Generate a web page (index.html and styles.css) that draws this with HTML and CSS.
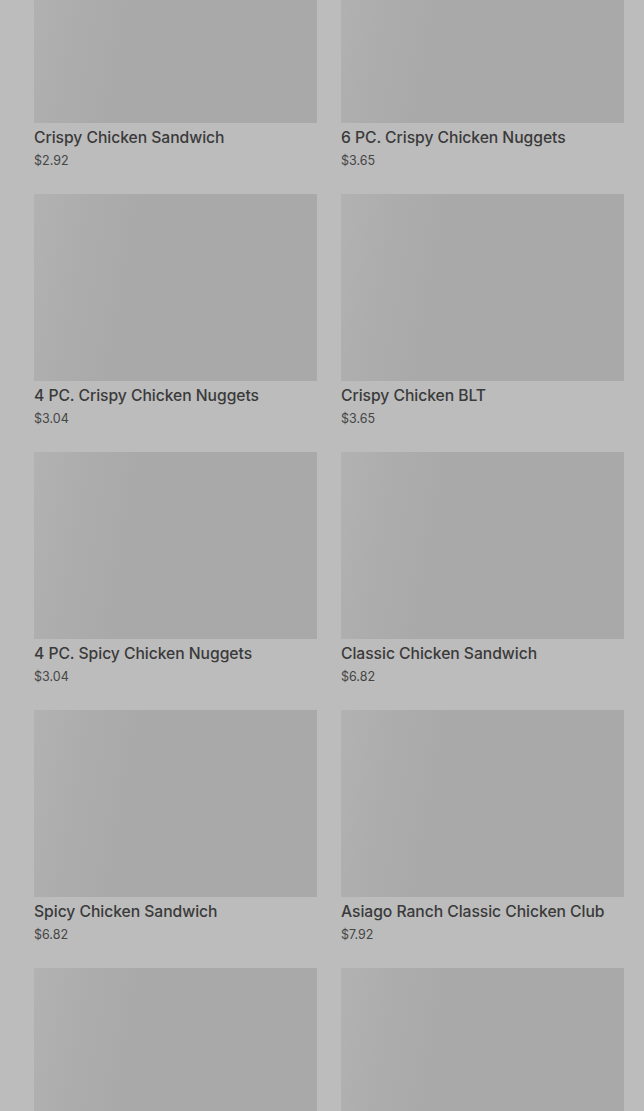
FILE: index.html
```html
<!DOCTYPE html>
<html lang="en">
<head>
  <meta charset="UTF-8">
  <title>Menu</title>
  <link rel="stylesheet" href="styles.css">
</head>
<body>

  <div class="menu">
    <div class="item">
      <div class="thumb"></div>
      <div class="name">Crispy Chicken Sandwich</div>
      <div class="price">$2.92</div>
    </div>
    <div class="item">
      <div class="thumb"></div>
      <div class="name">6 PC. Crispy Chicken Nuggets</div>
      <div class="price">$3.65</div>
    </div>
    <div class="item">
      <div class="thumb"></div>
      <div class="name">4 PC. Crispy Chicken Nuggets</div>
      <div class="price">$3.04</div>
    </div>
    <div class="item">
      <div class="thumb"></div>
      <div class="name">Crispy Chicken BLT</div>
      <div class="price">$3.65</div>
    </div>
    <div class="item">
      <div class="thumb"></div>
      <div class="name">4 PC. Spicy Chicken Nuggets</div>
      <div class="price">$3.04</div>
    </div>
    <div class="item">
      <div class="thumb"></div>
      <div class="name">Classic Chicken Sandwich</div>
      <div class="price">$6.82</div>
    </div>
    <div class="item">
      <div class="thumb"></div>
      <div class="name">Spicy Chicken Sandwich</div>
      <div class="price">$6.82</div>
    </div>
    <div class="item">
      <div class="thumb"></div>
      <div class="name">Asiago Ranch Classic Chicken Club</div>
      <div class="price">$7.92</div>
    </div>
    <!-- next row, only the images are in view -->
    <div class="item">
      <div class="thumb"></div>
    </div>
    <div class="item">
      <div class="thumb"></div>
    </div>
  </div>

</body>
</html>
```

FILE: styles.css
```css
html, body {
  background-color: #bcbcbc;
}

body {
  font-family: Inter, "Noto Sans", sans-serif;
  margin: 0;
  padding: 0 20px 0 34px;
  overflow: hidden;
  height: 1111px;
}

.menu {
  display: grid;
  grid-template-columns: 283px 283px;
  column-gap: 24px;
  row-gap: 24px;
  margin-top: -64px;
}

.item {
  display: flex;
  flex-direction: column;
}

.thumb {
  height: 187px;
  background: linear-gradient(100deg, #b2b2b2 0%, #adadad 16%, #a9a9a9 35%, #a9a9a9 100%);
  margin-bottom: 5px;
}

.name {
  font-size: 15.7px;
  font-weight: 500;
  line-height: 20px;
  letter-spacing: -0.05px;
  color: #3a3a3a;
  white-space: nowrap;
}

.price {
  font-size: 12.5px;
  line-height: 18px;
  margin-top: 4px;
  color: #454545;
}
```
